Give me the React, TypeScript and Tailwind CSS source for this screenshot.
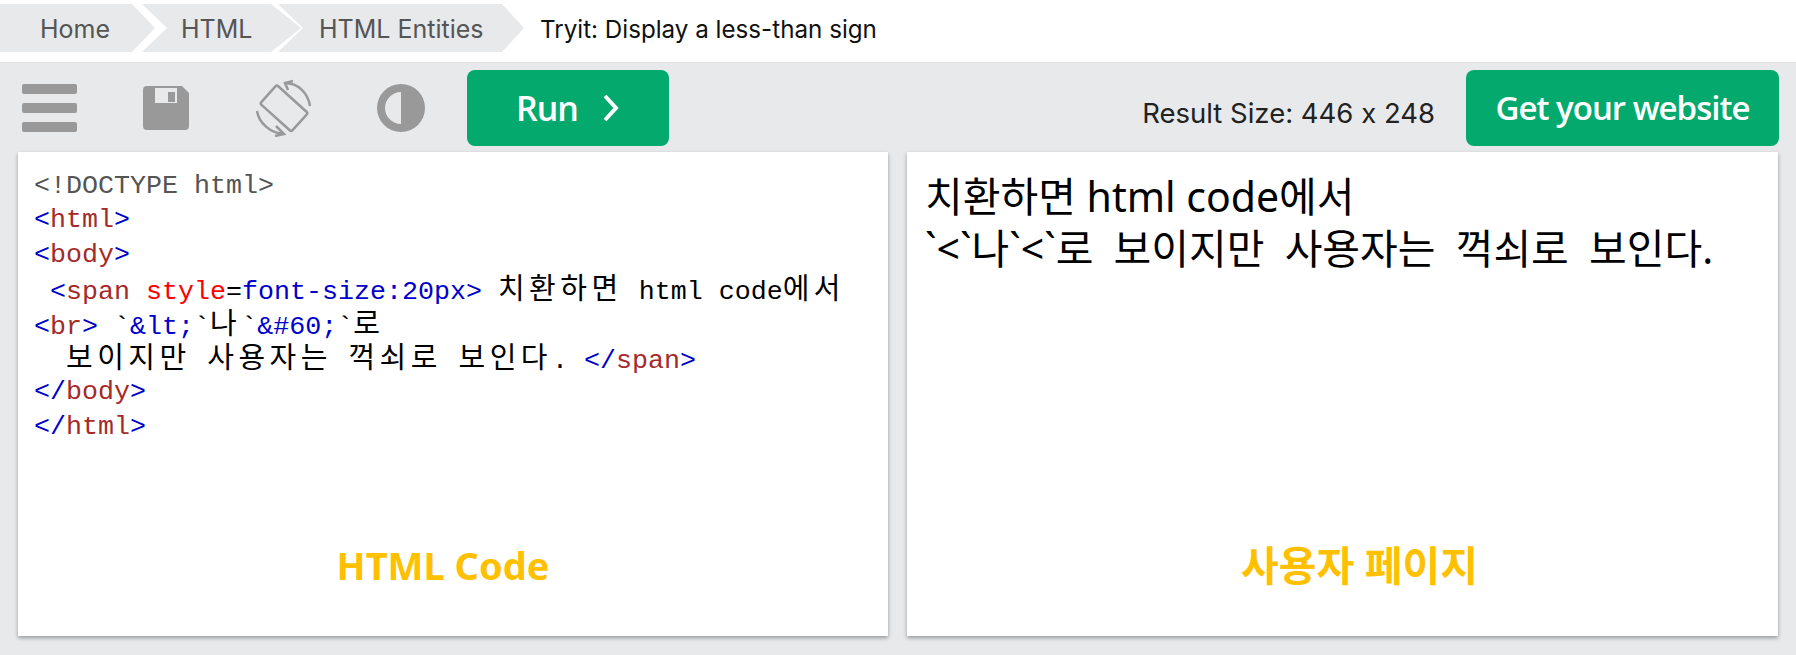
import React from "react";

const Tag = ({ children }: { children: React.ReactNode }) => (
  <span className="text-[#a52a2a]">{children}</span>
);

const B = ({ children }: { children: React.ReactNode }) => (
  <span className="text-[#0000cd]">{children}</span>
);

const Ko = ({ children }: { children: React.ReactNode }) => (
  <span className="text-[29px] leading-none tracking-[4.5px] [word-spacing:5.5px] font-['Noto_Sans_CJK_KR',sans-serif]">
    {children}
  </span>
);

const Line = ({ children }: { children: React.ReactNode }) => <div className="h-[34.4px]">{children}</div>;

function Breadcrumb() {
  return (
    <div className="flex h-[62px] items-start bg-white pt-1 font-['Inter',sans-serif] text-[25px] text-[#555]">
      <div className="flex h-12 w-[155px] items-center bg-[#e7e9eb] pl-10 pt-1 [clip-path:polygon(0_0,132px_0,100%_50%,132px_100%,0_100%)]">
        Home
      </div>
      <div className="-ml-[13px] flex h-12 w-[159px] items-center bg-[#e7e9eb] pl-[39px] pt-1 [clip-path:polygon(0_0,129px_0,100%_50%,129px_100%,0_100%,25px_50%)]">
        HTML
      </div>
      <div className="-ml-[23px] flex h-12 w-[246px] items-center bg-[#e7e9eb] pl-[41px] pt-1 [clip-path:polygon(0_0,224px_0,100%_50%,224px_100%,0_100%,25px_50%)]">
        HTML Entities
      </div>
      <div className="ml-4 flex h-12 items-center pt-1 text-[24.2px] text-[#111]">Tryit: Display a less-than sign</div>
    </div>
  );
}

function Toolbar() {
  return (
    <div className="flex h-[84px] items-center pt-[6px]">
      <svg width="55" height="48" viewBox="0 0 55 48" className="ml-[22px]" fill="#999">
        <rect width="55" height="10" y="0" rx="2" />
        <rect width="55" height="10" y="19" rx="2" />
        <rect width="55" height="10" y="38" rx="2" />
      </svg>
      <svg width="46" height="44" viewBox="0 0 46 44" className="ml-[66px]">
        <path
          fillRule="evenodd"
          fill="#999"
          d="M4 0H39L46 7V40a4 4 0 0 1-4 4H4a4 4 0 0 1-4-4V4a4 4 0 0 1 4-4ZM12 2V17H34V2Z"
        />
        <rect x="25" y="6" width="7" height="10" fill="#999" />
      </svg>
      <svg width="57" height="58" viewBox="0 0 57 58" className="ml-[66px]" fill="none" stroke="#999" strokeWidth="2.5">
        <rect x="8" y="16.8" width="42" height="25" rx="2" transform="rotate(42 29 29.3)" />
        <path d="M30 4C43 4 53 14 55 27" />
        <path d="M38 2L30 4L33 11" />
        <path d="M2 32C4 44 15 54 29 55" />
        <path d="M21 47L29 55L20 57" />
      </svg>
      <svg width="48" height="48" viewBox="0 0 48 48" className="ml-[65px]">
        <path
          fillRule="evenodd"
          fill="#999"
          d="M24 0a24 24 0 1 1 0 48a24 24 0 1 1 0-48ZM24 8a16 16 0 0 0 0 32Z"
        />
      </svg>
      <button className="ml-[42px] flex h-[76px] w-[202px] items-center justify-center rounded-lg bg-[#04aa6d] font-['Open_Sans',sans-serif] text-[34px] font-semibold tracking-[-1px] text-white">
        Run
        <svg width="18" height="28" viewBox="0 0 18 28" className="ml-6" fill="none" stroke="white" strokeWidth="4">
          <path d="M3 2l11 12L3 26" />
        </svg>
      </button>
      <div className="ml-auto mt-3 font-['Inter',sans-serif] text-[27.5px] text-[#222] [font-feature-settings:'calt'_0]">
        Result Size: 446 x 248
      </div>
      <button className="ml-[31px] mr-[17px] h-[76px] w-[313px] rounded-lg bg-[#04aa6d] font-['Open_Sans',sans-serif] text-[33px] font-semibold tracking-[-1px] text-white">
        Get your website
      </button>
    </div>
  );
}

function CodePanel() {
  return (
    <div className="flex w-[870px] flex-col bg-white pl-4 pt-[17px] shadow-[0_2px_4px_rgba(0,0,0,0.35)]">
      <pre className="font-['Liberation_Mono','Noto_Sans_CJK_KR',monospace] text-[26.67px] leading-[34.4px] text-black">
        <Line><span className="text-[#555]">{"<!DOCTYPE html>"}</span></Line>
        <Line><B>&lt;</B><Tag>html</Tag><B>&gt;</B></Line>
        <Line><B>&lt;</B><Tag>body</Tag><B>&gt;</B></Line>
        <Line>
          {" "}<B>&lt;</B><Tag>span</Tag> <span className="text-[#ff0000]">style</span>=<B>font-size:20px&gt;</B>{" "}
          <Ko>치환하면</Ko> html code<Ko>에서</Ko>
        </Line>
        <Line>
          <B>&lt;</B><Tag>br</Tag><B>&gt;</B> `<B>&amp;lt;</B>`<Ko>나</Ko>`<B>&amp;#60;</B>`<Ko>로</Ko>
        </Line>
        <Line>
          {"  "}<Ko>보이지만 사용자는 꺽쇠로 보인다</Ko>. <B>&lt;/</B><Tag>span</Tag><B>&gt;</B>
        </Line>
        <Line><B>&lt;/</B><Tag>body</Tag><B>&gt;</B></Line>
        <Line><B>&lt;/</B><Tag>html</Tag><B>&gt;</B></Line>
      </pre>
      <div className="mt-auto pb-[42px] pr-9 text-center font-['Noto_Sans','Noto_Sans_CJK_KR',sans-serif] text-[38px] font-bold text-[#ffc000]">
        HTML Code
      </div>
    </div>
  );
}

function ResultPanel() {
  return (
    <div className="flex w-[871px] flex-col bg-white pl-[18px] pt-[18px] shadow-[0_2px_4px_rgba(0,0,0,0.35)]">
      <div className="font-['Noto_Sans','Noto_Sans_CJK_KR',sans-serif] text-[41px] leading-[52px] text-black">
        <div>치환하면 html code에서</div>
        <div className="[word-spacing:9.5px]">`&lt;`나`&lt;`로 보이지만 사용자는 꺽쇠로 보인다.</div>
      </div>
      <div className="ml-4 mt-auto pb-[40px] text-center font-['Noto_Sans','Noto_Sans_CJK_KR',sans-serif] text-[41px] font-bold text-[#ffc000]">
        사용자 페이지
      </div>
    </div>
  );
}

export default function App() {
  return (
    <div className="flex h-[655px] flex-col bg-[#e7e9eb]">
      <Breadcrumb />
      <div className="border-t border-[#dfe1e3]">
        <Toolbar />
      </div>
      <div className="mt-[5px] flex h-[484px] gap-[19px] pl-[18px]">
        <CodePanel />
        <ResultPanel />
      </div>
    </div>
  );
}
